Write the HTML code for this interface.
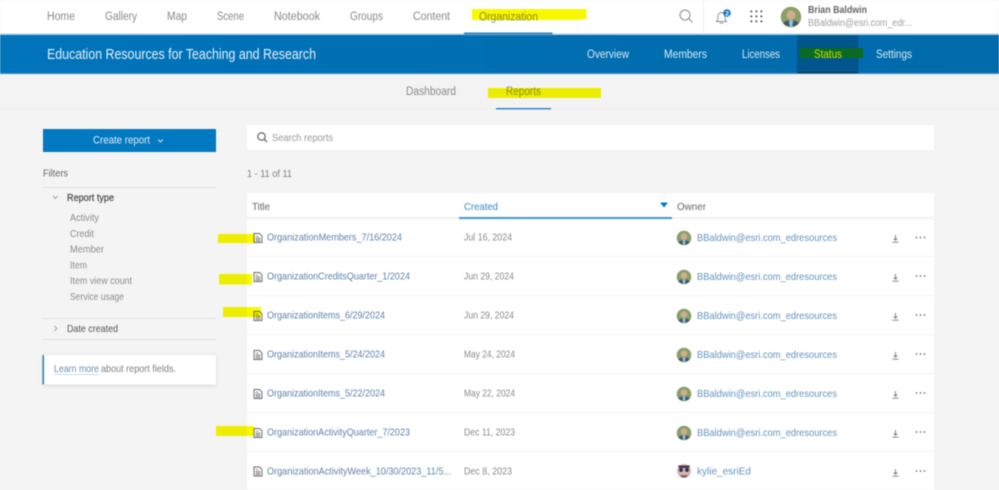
<!DOCTYPE html>
<html><head><meta charset="utf-8"><title>Organization Reports</title>
<style>
html,body{margin:0;padding:0;width:999px;height:490px;overflow:hidden;background:#f4f4f4}
svg{display:block;filter:blur(.4px)}
text{font-family:"Liberation Sans",sans-serif;font-size:10px;white-space:pre}
.n{font-size:11.5px;fill:#8a8a8a}
.b{font-size:11.5px;fill:#d9e9f5}
.f{font-size:10.3px;fill:#8c8c8c}
.h{font-size:10.5px;fill:#555}
.l{font-size:10.5px;fill:#5f83ad}
.d{font-size:10.2px;fill:#8a8a8a}
.o{font-size:10.5px;fill:#6494be}
.y{fill:#f8f800;mix-blend-mode:multiply}
</style></head><body>
<svg width="999" height="490" viewBox="0 0 999 490" xmlns="http://www.w3.org/2000/svg">
<defs>
<linearGradient id="bn" x1="0" x2="1" y1="0" y2="0"><stop offset="0" stop-color="#0074bb"/><stop offset="1" stop-color="#006aaa"/></linearGradient>
<filter id="sh" x="-10%" y="-30%" width="120%" height="170%"><feDropShadow dx="0" dy="1" stdDeviation="2" flood-color="#000" flood-opacity=".12"/></filter>
<g id="doc" fill="none" stroke="#666" stroke-width=".9"><path d="M.5.5H6L8.500 3V9.500H.5Z"/><path d="M2 3.200H5M2 5H7M2 6.500H7M2 8H7" stroke-width=".7"/></g>
<g id="dl" fill="none" stroke="#777" stroke-width=".9"><path d="M3 0V5M1.200 3.400 3 5.200 4.800 3.400M0 7.200H6"/></g>
<g id="more" fill="#777"><circle cx="1" cy="1" r=".9"/><circle cx="5" cy="1" r=".9"/><circle cx="9" cy="1" r=".9"/></g>
<g id="av"><circle r="7.300" fill="#86a068"/><circle cy="-1.400" r="3.300" fill="#d0ab8e"/><path d="M-5.500 4.500C-4 1.500 4 1.500 5.500 4.500 3 7.600-3 7.600-5.500 4.500Z" fill="#44566a"/><path d="M-1.500 2.200H1.500L1 6.800H-1Z" fill="#8cc6e0"/></g>
</defs>

<rect width="999" height="490" fill="#f4f4f4"/>

<!-- top nav -->
<rect width="999" height="34" fill="#fff"/>
<rect y="33.500" width="999" height="1.500" fill="#a9cde3"/>
<text class="n" x="47" y="20" textLength="28" lengthAdjust="spacingAndGlyphs">Home</text>
<text class="n" x="105" y="20" textLength="32" lengthAdjust="spacingAndGlyphs">Gallery</text>
<text class="n" x="167" y="20" textLength="20" lengthAdjust="spacingAndGlyphs">Map</text>
<text class="n" x="217" y="20" textLength="27" lengthAdjust="spacingAndGlyphs">Scene</text>
<text class="n" x="274" y="20" textLength="46" lengthAdjust="spacingAndGlyphs">Notebook</text>
<text class="n" x="350" y="20" textLength="33" lengthAdjust="spacingAndGlyphs">Groups</text>
<text class="n" x="413" y="20" textLength="37" lengthAdjust="spacingAndGlyphs">Content</text>
<text class="n" x="479" y="20.500" textLength="59" lengthAdjust="spacingAndGlyphs" style="fill:#8f8f8f">Organization</text>
<path class="y" d="M472 9H586.500V19H580V20H472Z"/>
<rect x="464" y="32.500" width="88.500" height="2" fill="#3187c0"/>

<g fill="none" stroke="#8a8a8a" stroke-width="1"><circle cx="685" cy="15" r="5"/><path d="M688.700 18.700 692.500 22.500"/></g>
<rect x="703" y="0" width="1" height="34" fill="#eee"/>
<path d="M716.500 21.500c1.500-1.500 1.500-3 1.500-5 0-2.500 1.500-4 3.500-4s3.500 1.500 3.500 4c0 2 0 3.500 1.500 5ZM720 22.500c.5 1.200 2.500 1.200 3 0" fill="none" stroke="#888" stroke-width=".9"/>
<circle cx="727" cy="13" r="3.800" fill="#0f78c2"/>
<text x="725.400" y="15.300" style="font-size:6.500px;fill:#fff;font-weight:bold">2</text>
<g fill="#444"><rect x="750.500" y="10.500" width="1.700" height="1.700"/><rect x="755.500" y="10.500" width="1.700" height="1.700"/><rect x="760.500" y="10.500" width="1.700" height="1.700"/><rect x="750.500" y="15.500" width="1.700" height="1.700"/><rect x="755.500" y="15.500" width="1.700" height="1.700"/><rect x="760.500" y="15.500" width="1.700" height="1.700"/><rect x="750.500" y="20.500" width="1.700" height="1.700"/><rect x="755.500" y="20.500" width="1.700" height="1.700"/><rect x="760.500" y="20.500" width="1.700" height="1.700"/></g>
<g transform="translate(791,17) scale(1.400)"><use href="#av"/></g>
<text x="808" y="13" textLength="59" lengthAdjust="spacingAndGlyphs" style="font-size:10.500px;font-weight:bold;fill:#666">Brian Baldwin</text>
<text x="808" y="26" textLength="104" lengthAdjust="spacingAndGlyphs" style="font-size:10px;fill:#a0a0a0">BBaldwin@esri.com_edr...</text>

<!-- banner -->
<rect y="35" width="999" height="38" fill="url(#bn)"/>
<rect y="72.500" width="999" height="1.500" fill="#1f86c8"/>
<text x="47" y="59" textLength="269" lengthAdjust="spacingAndGlyphs" style="font-size:14.500px;fill:#e3f0f9">Education Resources for Teaching and Research</text>
<text class="b" x="587" y="58" textLength="42" lengthAdjust="spacingAndGlyphs">Overview</text>
<text class="b" x="664" y="58" textLength="43" lengthAdjust="spacingAndGlyphs">Members</text>
<text class="b" x="742" y="58" textLength="38" lengthAdjust="spacingAndGlyphs">Licenses</text>
<rect x="797" y="35" width="61.500" height="38" fill="#00568c"/>
<rect x="797" y="71.500" width="61.500" height="1.500" fill="#023a5e"/>
<rect x="799.500" y="48" width="63.500" height="10" fill="#0a6a20"/>
<text class="b" x="814" y="58" textLength="28" lengthAdjust="spacingAndGlyphs" style="fill:#c3e000">Status</text>
<text class="b" x="876" y="58" textLength="36" lengthAdjust="spacingAndGlyphs">Settings</text>

<!-- sub nav -->
<rect y="74" width="999" height="35" fill="#f3f3f3"/>
<rect y="108.500" width="999" height="1" fill="#ebebeb"/>
<text class="n" x="406" y="95" textLength="50" lengthAdjust="spacingAndGlyphs">Dashboard</text>
<text class="n" x="506" y="95" textLength="35" lengthAdjust="spacingAndGlyphs" style="fill:#8f8f8f">Reports</text>
<rect class="y" x="488" y="88" width="113" height="10"/>
<rect x="496" y="108" width="55" height="1.500" fill="#3187c0"/>

<!-- sidebar -->
<rect x="43" y="129" width="173" height="23" fill="#0079c1"/>
<text x="93" y="143.500" textLength="57" lengthAdjust="spacingAndGlyphs" style="font-size:11px;fill:#dcecf7">Create report</text>
<path d="M158 139.500 160.500 142 163 139.500" fill="none" stroke="#dcecf7" stroke-width=".9"/>
<text x="43" y="176.500" textLength="25" lengthAdjust="spacingAndGlyphs" style="font-size:10.500px;fill:#666">Filters</text>
<rect x="43" y="187" width="173" height="1" fill="#e2e2e2"/>
<path d="M53 196 55.300 198.500 57.600 196" fill="none" stroke="#888" stroke-width=".8"/>
<text class="h" x="67" y="201" textLength="47" lengthAdjust="spacingAndGlyphs" style="fill:#3f3f3f;stroke:#3f3f3f;stroke-width:.15px">Report type</text>
<text class="f" x="70" y="221" textLength="29" lengthAdjust="spacingAndGlyphs">Activity</text>
<text class="f" x="70" y="237" textLength="24" lengthAdjust="spacingAndGlyphs">Credit</text>
<text class="f" x="70" y="252.500" textLength="34" lengthAdjust="spacingAndGlyphs">Member</text>
<text class="f" x="70" y="268.500" textLength="17" lengthAdjust="spacingAndGlyphs">Item</text>
<text class="f" x="70" y="284" textLength="62" lengthAdjust="spacingAndGlyphs">Item view count</text>
<text class="f" x="70" y="300" textLength="54" lengthAdjust="spacingAndGlyphs">Service usage</text>
<rect x="43" y="318" width="173" height="1" fill="#e2e2e2"/>
<path d="M54.500 326 56.800 328.500 54.500 331" fill="none" stroke="#888" stroke-width=".8"/>
<text class="h" x="67" y="332" textLength="51" lengthAdjust="spacingAndGlyphs">Date created</text>
<rect x="43" y="339" width="173" height="1" fill="#e2e2e2"/>
<rect x="43" y="355" width="173" height="29.500" fill="#fff" filter="url(#sh)"/>
<rect x="42.500" y="355" width="1.500" height="29.500" fill="#2a7fb8"/>
<text x="54" y="372" textLength="45" lengthAdjust="spacingAndGlyphs" style="font-size:10.200px;fill:#6d8fb0">Learn more</text>
<rect x="54" y="374" width="45" height="1" fill="#c5dcec"/>
<text x="101" y="372" textLength="75" lengthAdjust="spacingAndGlyphs" style="font-size:10.200px;fill:#808080">about report fields.</text>

<!-- search -->
<rect x="247" y="125" width="687" height="25" fill="#fff"/>
<g fill="none" stroke="#555" stroke-width="1.100"><circle cx="261.500" cy="136.500" r="3.700"/><path d="M264.200 139.200 267 142"/></g>
<text x="272" y="141" textLength="61" lengthAdjust="spacingAndGlyphs" style="font-size:10.500px;fill:#999">Search reports</text>
<text x="247" y="177" textLength="45" lengthAdjust="spacingAndGlyphs" style="font-size:10.200px;fill:#808080">1 - 11 of 11</text>

<!-- table -->
<rect x="247" y="193" width="687" height="297" fill="#fff"/>
<rect x="247" y="217" width="687" height="2" fill="#f2f2f2"/>
<text x="252" y="210" textLength="18" lengthAdjust="spacingAndGlyphs" style="font-size:10.500px;fill:#666">Title</text>
<text x="464" y="210" textLength="34" lengthAdjust="spacingAndGlyphs" style="font-size:10.500px;fill:#3a88c4">Created</text>
<rect x="459" y="217" width="213" height="2" fill="#3f97d0"/>
<path d="M660 202.500H668L664 207.500Z" fill="#0079c1"/>
<text x="677" y="210" textLength="29" lengthAdjust="spacingAndGlyphs" style="font-size:10.500px;fill:#666">Owner</text>

<g fill="#f4f4f4"><rect x="247" y="256" width="687" height="1"/><rect x="247" y="295" width="687" height="1"/><rect x="247" y="334" width="687" height="1"/><rect x="247" y="373" width="687" height="1"/><rect x="247" y="412" width="687" height="1"/><rect x="247" y="451" width="687" height="1"/></g>

<!-- row 1 -->
<use href="#doc" x="253.500" y="233"/>
<text class="l" x="267" y="240.500" textLength="135" lengthAdjust="spacingAndGlyphs">OrganizationMembers_7/16/2024</text>
<text class="d" x="464" y="240.500" textLength="48" lengthAdjust="spacingAndGlyphs">Jul 16, 2024</text>
<use href="#av" x="684" y="238"/>
<text class="o" x="697" y="241" textLength="140" lengthAdjust="spacingAndGlyphs">BBaldwin@esri.com_edresources</text>
<use href="#dl" x="892.500" y="235"/><use href="#more" x="915.500" y="236.500"/>
<path class="y" d="M218 234H254.500V243H218Z"/>

<!-- row 2 -->
<use href="#doc" x="253.500" y="272"/>
<text class="l" x="267" y="279.500" textLength="143" lengthAdjust="spacingAndGlyphs">OrganizationCreditsQuarter_1/2024</text>
<text class="d" x="464" y="279.500" textLength="50" lengthAdjust="spacingAndGlyphs">Jun 29, 2024</text>
<use href="#av" x="684" y="277"/>
<text class="o" x="697" y="280" textLength="140" lengthAdjust="spacingAndGlyphs">BBaldwin@esri.com_edresources</text>
<use href="#dl" x="892.500" y="274"/><use href="#more" x="915.500" y="275"/>
<path class="y" d="M219 274H252V284.500H219Z"/>

<!-- row 3 -->
<use href="#doc" x="253.500" y="311"/>
<text class="l" x="267" y="318.500" textLength="118" lengthAdjust="spacingAndGlyphs">OrganizationItems_6/29/2024</text>
<text class="d" x="464" y="318.500" textLength="50" lengthAdjust="spacingAndGlyphs">Jun 29, 2024</text>
<use href="#av" x="684" y="316"/>
<text class="o" x="697" y="319" textLength="140" lengthAdjust="spacingAndGlyphs">BBaldwin@esri.com_edresources</text>
<use href="#dl" x="892.500" y="313"/><use href="#more" x="915.500" y="314"/>
<path class="y" d="M223 307H261V317H223Z"/>

<!-- row 4 -->
<use href="#doc" x="253.500" y="350"/>
<text class="l" x="267" y="357.500" textLength="118" lengthAdjust="spacingAndGlyphs">OrganizationItems_5/24/2024</text>
<text class="d" x="464" y="357.500" textLength="51" lengthAdjust="spacingAndGlyphs">May 24, 2024</text>
<use href="#av" x="684" y="355"/>
<text class="o" x="697" y="358" textLength="140" lengthAdjust="spacingAndGlyphs">BBaldwin@esri.com_edresources</text>
<use href="#dl" x="892.500" y="352"/><use href="#more" x="915.500" y="353"/>

<!-- row 5 -->
<use href="#doc" x="253.500" y="389"/>
<text class="l" x="267" y="396.500" textLength="118" lengthAdjust="spacingAndGlyphs">OrganizationItems_5/22/2024</text>
<text class="d" x="464" y="396.500" textLength="51" lengthAdjust="spacingAndGlyphs">May 22, 2024</text>
<use href="#av" x="684" y="394"/>
<text class="o" x="697" y="397" textLength="140" lengthAdjust="spacingAndGlyphs">BBaldwin@esri.com_edresources</text>
<use href="#dl" x="892.500" y="391"/><use href="#more" x="915.500" y="392"/>

<!-- row 6 -->
<use href="#doc" x="253.500" y="428"/>
<text class="l" x="267" y="435.500" textLength="143" lengthAdjust="spacingAndGlyphs">OrganizationActivityQuarter_7/2023</text>
<text class="d" x="464" y="435.500" textLength="51" lengthAdjust="spacingAndGlyphs">Dec 11, 2023</text>
<use href="#av" x="684" y="433"/>
<text class="o" x="697" y="436" textLength="140" lengthAdjust="spacingAndGlyphs">BBaldwin@esri.com_edresources</text>
<use href="#dl" x="892.500" y="430"/><use href="#more" x="915.500" y="431"/>
<path class="y" d="M216 426H254V436H216Z"/>

<!-- row 7 -->
<use href="#doc" x="253.500" y="466.500"/>
<text class="l" x="267" y="474.500" textLength="184" lengthAdjust="spacingAndGlyphs">OrganizationActivityWeek_10/30/2023_11/5...</text>
<text class="d" x="464" y="474.500" textLength="48" lengthAdjust="spacingAndGlyphs">Dec 8, 2023</text>
<circle cx="684" cy="471" r="7" fill="#d9b7ad"/>
<path d="M678 465.500H690L689 468H679Z" fill="#4a3550"/>
<circle cx="681" cy="470" r="2" fill="#2f3560"/><circle cx="687" cy="470" r="2" fill="#2f3560"/>
<path d="M680 475H688L686 477.500H682Z" fill="#8b5d6b"/>
<text class="o" x="697" y="474.500" textLength="54" lengthAdjust="spacingAndGlyphs">kylie_esriEd</text>
<use href="#dl" x="892.500" y="469"/><use href="#more" x="915.500" y="470"/>
</svg>
</body></html>
